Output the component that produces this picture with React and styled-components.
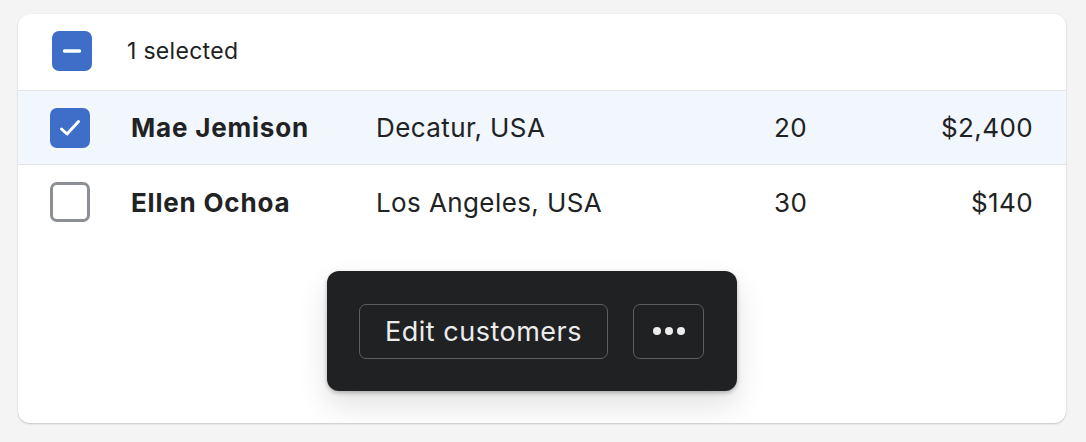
import React from "react";
import styled, { createGlobalStyle } from "styled-components";

const Global = createGlobalStyle`
  html, body { margin: 0; padding: 0; background: #f4f4f4; }
  body { font-family: Inter, "Noto Sans", sans-serif; color: #202223; }
  * { box-sizing: border-box; }
`;

const Page = styled.div`
  padding: 14px 20px 20px 18px;
`;

const Card = styled.div`
  width: 1048px;
  background: #ffffff;
  border-radius: 12px;
  box-shadow: 0 1px 2px rgba(0, 0, 0, 0.18), 0 0 1px rgba(0, 0, 0, 0.08);
  overflow: hidden;
`;

const Header = styled.div`
  height: 77px;
  display: flex;
  align-items: center;
  padding-left: 34px;
  gap: 35px;
  border-bottom: 1px solid #e1e3e5;
  font-size: 23px;
  letter-spacing: 0.3px;
  padding-bottom: 2px;
`;

const Row = styled.div`
  height: 74px;
  display: grid;
  grid-template-columns: 81px 245px 398px 1fr;
  align-items: center;
  padding: 0 33px 0 32px;
  background: ${(p) => (p.$selected ? "#f2f6fd" : "#ffffff")};
  border-bottom: ${(p) => (p.$last ? "none" : "1px solid #e1e3e5")};
  font-size: 26px;
  letter-spacing: 0.4px;
`;

const Name = styled.span`
  font-weight: 700;
  letter-spacing: 0.8px;
`;

const Cell = styled.span`
  text-align: left;
`;

const Split = styled.span`
  display: flex;
  justify-content: space-between;
`;

const Box = styled.span`
  width: 40px;
  height: 40px;
  border-radius: 7px;
  display: flex;
  align-items: center;
  justify-content: center;
  background: ${(p) => (p.$on ? "#3e6ec8" : "#ffffff")};
  border: ${(p) => (p.$on ? "none" : "3px solid #8c8f94")};
`;

const Footer = styled.div`
  padding: 32px 0 32px 309px;
`;

const Bar = styled.div`
  width: 410px;
  height: 120px;
  background: #202123;
  border-radius: 12px;
  display: flex;
  align-items: center;
  gap: 25px;
  padding: 0 33px 0 32px;
  box-shadow: 0 14px 30px rgba(0, 0, 0, 0.12), 0 2px 4px rgba(0, 0, 0, 0.25);
`;

const BarButton = styled.button`
  height: 55px;
  width: ${(p) => p.$w}px;
  background: transparent;
  border: 1.5px solid #5c5e61;
  border-radius: 7px;
  color: #ececec;
  font-family: Inter, "Noto Sans", sans-serif;
  font-size: 27px;
  letter-spacing: 0.5px;
  display: flex;
  align-items: center;
  justify-content: center;
  padding: 0;
`;

const Check = () => (
  <svg width="24" height="24" viewBox="0 0 24 24">
    <path d="M3.5 13 L9 18 L20.5 5.5" fill="none" stroke="#fff" strokeWidth="3" strokeLinecap="round" strokeLinejoin="round" />
  </svg>
);

const Minus = () => (
  <svg width="24" height="24" viewBox="0 0 24 24">
    <path d="M4.5 12 H19.5" stroke="#fff" strokeWidth="3.4" strokeLinecap="round" />
  </svg>
);

const Dots = () => (
  <svg width="34" height="10" viewBox="0 0 34 10">
    <circle cx="5" cy="5" r="4" fill="#ececec" />
    <circle cx="17" cy="5" r="4" fill="#ececec" />
    <circle cx="29" cy="5" r="4" fill="#ececec" />
  </svg>
);

const rows = [
  { name: "Mae Jemison", loc: "Decatur, USA", n: "20", amt: "$2,400", sel: true },
  { name: "Ellen Ochoa", loc: "Los Angeles, USA", n: "30", amt: "$140", sel: false },
];

export default function App() {
  return (
    <>
      <Global />
      <Page>
        <Card>
          <Header>
            <Box $on>
              <Minus />
            </Box>
            <span>1 selected</span>
          </Header>
          {rows.map((r, i) => (
            <Row key={r.name} $selected={r.sel} $last={i === rows.length - 1}>
              <Box $on={r.sel}>{r.sel && <Check />}</Box>
              <Name>{r.name}</Name>
              <Cell>{r.loc}</Cell>
              <Split>
                <span>{r.n}</span>
                <span>{r.amt}</span>
              </Split>
            </Row>
          ))}
          <Footer>
            <Bar>
              <BarButton $w={249}>Edit customers</BarButton>
              <BarButton $w={71}>
                <Dots />
              </BarButton>
            </Bar>
          </Footer>
        </Card>
      </Page>
    </>
  );
}
